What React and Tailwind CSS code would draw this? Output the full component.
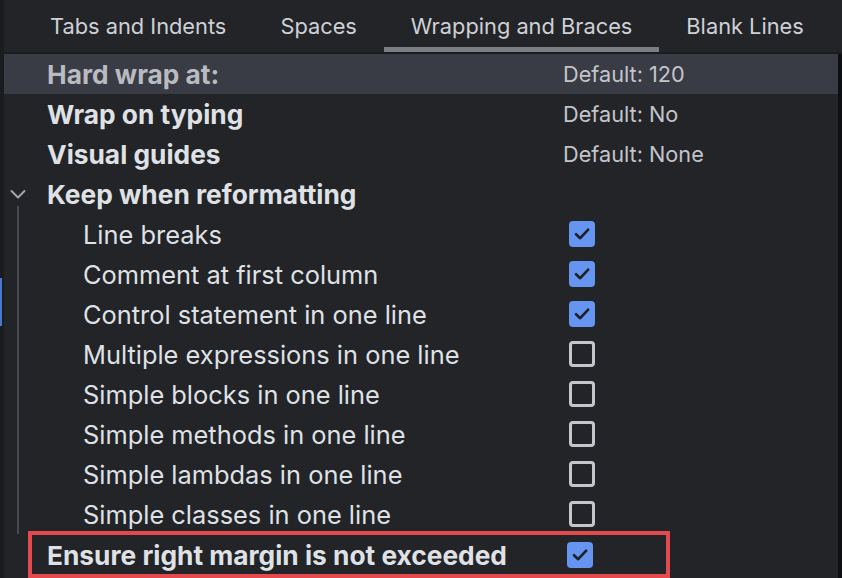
import React from "react";

const tabs = ["Tabs and Indents", "Spaces", "Wrapping and Braces", "Blank Lines"];

const keepItems = [
  { label: "Line breaks", checked: true },
  { label: "Comment at first column", checked: true },
  { label: "Control statement in one line", checked: true },
  { label: "Multiple expressions in one line", checked: false },
  { label: "Simple blocks in one line", checked: false },
  { label: "Simple methods in one line", checked: false },
  { label: "Simple lambdas in one line", checked: false },
  { label: "Simple classes in one line", checked: false },
];

function Checkbox({ checked }) {
  if (checked) {
    return (
      <div className="w-[26px] h-[26px] rounded-[4px] bg-[#6595f0] flex items-center justify-center">
        <svg width="20" height="20" viewBox="0 0 20 20" fill="none">
          <path
            d="M4 10.2 L8.2 14.2 L16.2 5.6"
            stroke="#1f2023"
            strokeWidth="2.6"
            strokeLinecap="round"
            strokeLinejoin="round"
          />
        </svg>
      </div>
    );
  }
  return <div className="w-[26px] h-[26px] rounded-[4px] border-[3px] border-[#c4c6cb]" />;
}

function OptionRow({ label, value, bold, selected }) {
  return (
    <div className={`flex items-center h-[40px] ${selected ? "bg-[#393b45]" : ""}`}>
      <div
        className={`w-[559px] pl-[43px] pt-[2px] text-[26.3px] ${
          bold ? "font-bold" : ""
        } ${selected ? "text-[#b9bbc0]" : "text-[#dfe1e5]"}`}
      >
        {label}
      </div>
      <div className="text-[21.7px] pt-[1px] text-[#c3c5ca]">{value}</div>
    </div>
  );
}

export default function App() {
  return (
    <div
      className="w-[842px] h-[578px] overflow-hidden bg-[#222428] flex"
      style={{ fontFamily: "Inter, 'Noto Sans', sans-serif" }}
    >
      {/* left gutter */}
      <div className="w-[4px] bg-[#1b1c1f] flex flex-col">
        <div className="h-[278px]" />
        <div className="w-[2px] h-[48px] bg-[#4a78cf]" />
      </div>

      <div className="flex-1 flex flex-col">
        {/* tab bar */}
        <div className="h-[54px] flex border-b-[2px] border-[#1b1c1f] pl-[19px]">
          {tabs.map((t, i) => (
            <div
              key={t}
              className={`px-[27px] flex items-center text-[21.8px] text-[#ced0d6] border-b-[5px] ${
                i === 2 ? "border-[#7b7e84]" : "border-transparent"
              }`}
            >
              <span className="pt-[6px]">{t}</span>
            </div>
          ))}
        </div>

        <div className="flex-1 flex">
          <div className="flex-1 flex flex-col">
            <OptionRow label="Hard wrap at:" value="Default: 120" bold selected />
            <OptionRow label="Wrap on typing" value="Default: No" bold />
            <OptionRow label="Visual guides" value="Default: None" bold />

            <div className="flex items-center h-[40px]">
              <div className="w-[43px] flex items-center pl-[5px]">
                <svg width="18" height="18" viewBox="0 0 18 18" fill="none">
                  <path d="M2.5 6 L9 12.5 L15.5 6" stroke="#a3a6ad" strokeWidth="2" strokeLinecap="round" strokeLinejoin="round" />
                </svg>
              </div>
              <div className="text-[26.3px] pt-[2px] font-bold text-[#dfe1e5]">Keep when reformatting</div>
            </div>

            <div className="ml-[13px] border-l-[2px] border-[#45484e] -mt-[8px] pt-[8px]">
              {keepItems.map((it) => (
                <div key={it.label} className="flex items-center h-[40px]">
                  <div className="w-[550px] pl-[64px] pt-[2px] text-[25.4px] text-[#dfe1e5]">{it.label}</div>
                  <Checkbox checked={it.checked} />
                </div>
              ))}
            </div>

            <div className="ml-[24px] w-[642px] h-[47px] -mt-[3px] border-[4px] border-[#e5484d] flex items-center">
              <div className="w-[535px] pl-[15px] pt-[2px] text-[26.3px] font-bold text-[#dfe1e5]">
                Ensure right margin is not exceeded
              </div>
              <Checkbox checked />
            </div>
          </div>
          {/* right edge */}
          <div className="w-[4px] bg-[#0e0f10]" />
        </div>
      </div>
    </div>
  );
}
